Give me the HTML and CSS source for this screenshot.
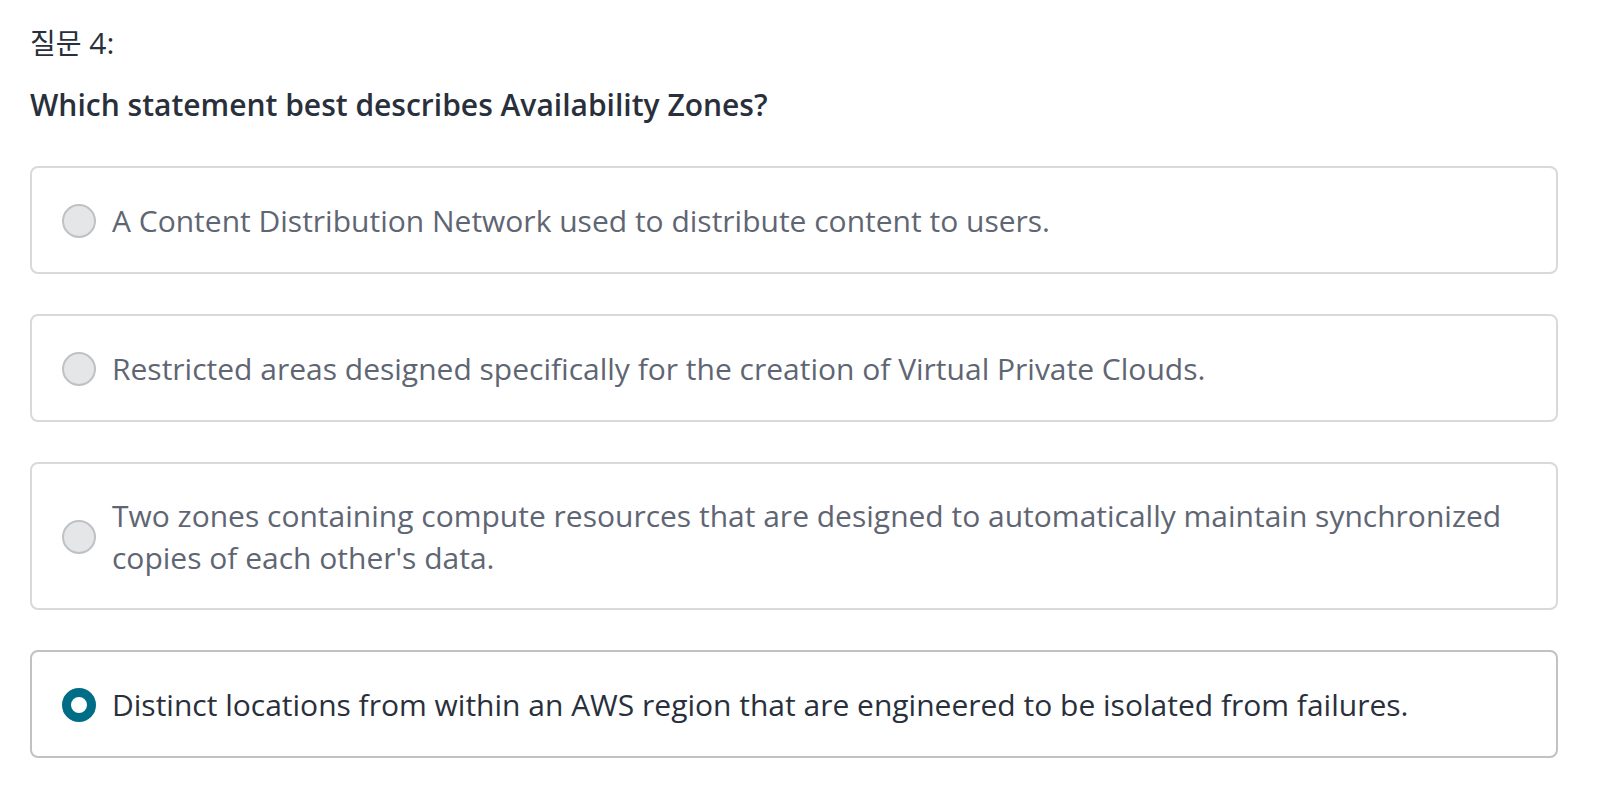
FILE: index.html
```html
<!DOCTYPE html>
<html lang="ko">
<head>
<meta charset="utf-8">
<meta name="viewport" content="width=device-width, initial-scale=1">
<title>질문 4</title>
<link rel="stylesheet" href="styles.css">
</head>
<body>
<form class="question">
  <fieldset class="question-set">
    <legend class="question-legend">
      <span class="question-number"><span class="hangul">질문</span> 4:</span>
      <span class="question-title">Which statement best describes Availability Zones?</span>
    </legend>
    <div class="options">
      <label class="option" for="a1">
        <input class="radio" type="radio" name="answer" id="a1" disabled>
        <span class="option-text">A Content Distribution Network used to distribute content to users.</span>
      </label>
      <label class="option" for="a2">
        <input class="radio" type="radio" name="answer" id="a2" disabled>
        <span class="option-text">Restricted areas designed specifically for the creation of Virtual Private Clouds.</span>
      </label>
      <label class="option" for="a3">
        <input class="radio" type="radio" name="answer" id="a3" disabled>
        <span class="option-text">Two zones containing compute resources that are designed to automatically maintain synchronized copies of each other's data.</span>
      </label>
      <label class="option option-selected" for="a4">
        <input class="radio" type="radio" name="answer" id="a4" checked>
        <span class="option-text">Distinct locations from within an AWS region that are engineered to be isolated from failures.</span>
      </label>
    </div>
  </fieldset>
</form>
</body>
</html>
```
FILE: styles.css
```css
* {
  box-sizing: border-box;
}

body {
  margin: 0;
  background: #fff;
  color: #29303b;
  font-family: "Open Sans", "Noto Sans CJK KR", sans-serif;
  font-size: 30px;
  line-height: 42px;
}

.question {
  padding: 22px 40px 54px 30px;
}

.question-set {
  min-width: 0;
  margin: 0;
  padding: 0;
  border: 0;
}

.question-legend {
  display: flex;
  flex-direction: column;
  gap: 20px;
  padding: 0;
}

.hangul {
  font-size: 28px;
}

.question-title {
  font-weight: 600;
}

.options {
  display: flex;
  flex-direction: column;
  gap: 40px;
  margin-top: 40px;
}

.option {
  display: flex;
  align-items: center;
  gap: 16px;
  min-height: 108px;
  padding: 31px 30px 29px;
  border: 2px solid #d8d9da;
  border-radius: 8px;
  color: #5f6673;
}

.option-selected {
  border-color: #c0c1c3;
  color: #29303b;
}

.radio {
  appearance: none;
  flex: none;
  width: 34px;
  height: 34px;
  margin: 0;
  border: 2px solid #bfc1c4;
  border-radius: 50%;
  background: #e4e6e8;
}

.radio:checked {
  border: 9px solid #006d86;
  background: #fff;
}
```
